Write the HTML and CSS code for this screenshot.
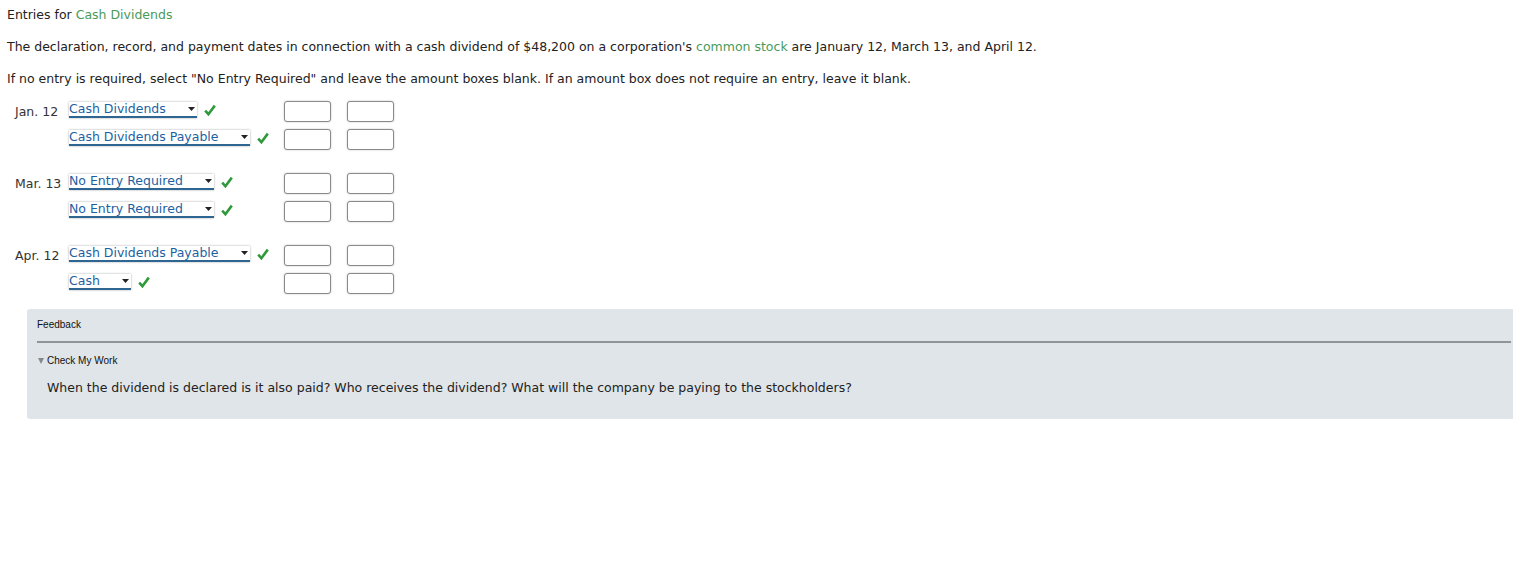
FILE: index.html
```html
<!DOCTYPE html>
<html>
<head>
<meta charset="utf-8">
<link rel="stylesheet" href="styles.css">
</head>
<body>
<div class="page">
  <p class="line">Entries for <span class="term">Cash Dividends</span></p>
  <p class="line">The declaration, record, and payment dates in connection with a cash dividend of $48,200 on a corporation's <span class="term">common stock</span> are January 12, March 13, and April 12.</p>
  <p class="line last">If no entry is required, select "No Entry Required" and leave the amount boxes blank. If an amount box does not require an entry, leave it blank.</p>

  <div class="journal">
    <div class="group">
      <div class="row">
        <div class="date">Jan. 12</div>
        <div class="acct"><span class="select"><span class="sel-text">Cash Dividends</span><svg class="arrow" viewBox="0 0 7 4" width="7" height="4"><path d="M0 0H7L3.5 4Z"/></svg></span><svg class="check" viewBox="0 0 12 12" width="12" height="12"><path d="M1.2 6.6L4.4 10.2L10.8 1.6"/></svg></div>
        <div class="amt"><span class="box"></span></div>
        <div class="amt"><span class="box"></span></div>
      </div>
      <div class="row">
        <div class="date"></div>
        <div class="acct"><span class="select"><span class="sel-text">Cash Dividends Payable</span><svg class="arrow" viewBox="0 0 7 4" width="7" height="4"><path d="M0 0H7L3.5 4Z"/></svg></span><svg class="check" viewBox="0 0 12 12" width="12" height="12"><path d="M1.2 6.6L4.4 10.2L10.8 1.6"/></svg></div>
        <div class="amt"><span class="box"></span></div>
        <div class="amt"><span class="box"></span></div>
      </div>
    </div>
    <div class="group">
      <div class="row">
        <div class="date">Mar. 13</div>
        <div class="acct"><span class="select"><span class="sel-text">No Entry Required</span><svg class="arrow" viewBox="0 0 7 4" width="7" height="4"><path d="M0 0H7L3.5 4Z"/></svg></span><svg class="check" viewBox="0 0 12 12" width="12" height="12"><path d="M1.2 6.6L4.4 10.2L10.8 1.6"/></svg></div>
        <div class="amt"><span class="box"></span></div>
        <div class="amt"><span class="box"></span></div>
      </div>
      <div class="row">
        <div class="date"></div>
        <div class="acct"><span class="select"><span class="sel-text">No Entry Required</span><svg class="arrow" viewBox="0 0 7 4" width="7" height="4"><path d="M0 0H7L3.5 4Z"/></svg></span><svg class="check" viewBox="0 0 12 12" width="12" height="12"><path d="M1.2 6.6L4.4 10.2L10.8 1.6"/></svg></div>
        <div class="amt"><span class="box"></span></div>
        <div class="amt"><span class="box"></span></div>
      </div>
    </div>
    <div class="group">
      <div class="row">
        <div class="date">Apr. 12</div>
        <div class="acct"><span class="select"><span class="sel-text">Cash Dividends Payable</span><svg class="arrow" viewBox="0 0 7 4" width="7" height="4"><path d="M0 0H7L3.5 4Z"/></svg></span><svg class="check" viewBox="0 0 12 12" width="12" height="12"><path d="M1.2 6.6L4.4 10.2L10.8 1.6"/></svg></div>
        <div class="amt"><span class="box"></span></div>
        <div class="amt"><span class="box"></span></div>
      </div>
      <div class="row">
        <div class="date"></div>
        <div class="acct"><span class="select"><span class="sel-text">Cash</span><svg class="arrow" viewBox="0 0 7 4" width="7" height="4"><path d="M0 0H7L3.5 4Z"/></svg></span><svg class="check" viewBox="0 0 12 12" width="12" height="12"><path d="M1.2 6.6L4.4 10.2L10.8 1.6"/></svg></div>
        <div class="amt"><span class="box"></span></div>
        <div class="amt"><span class="box"></span></div>
      </div>
    </div>
  </div>

  <div class="feedback">
    <div class="fb-title">Feedback</div>
    <div class="fb-toggle"><svg class="tri" viewBox="0 0 6 6" width="6" height="6"><path d="M0 0H6L3 6Z"/></svg>Check My Work</div>
    <p class="fb-text">When the dividend is declared is it also paid? Who receives the dividend? What will the company be paying to the stockholders?</p>
  </div>
</div>
</body>
</html>
```

FILE: styles.css
```css
html, body {
  margin: 0;
  padding: 0;
  background: #ffffff;
}

.page {
  padding: 7px 0 0 7px;
  font-family: "DejaVu Sans", Verdana, sans-serif;
  font-size: 12.5px;
  color: #222222;
}

.line {
  margin: 0 0 16px 0;
  line-height: 16px;
}

.line.last {
  margin-bottom: 10px;
}

.term {
  color: #4a9a5a;
}

.journal {
  display: flex;
  flex-direction: column;
  gap: 16px;
}

.row {
  display: grid;
  grid-template-columns: 62px 215px 63px 47px;
  align-items: center;
  height: 28px;
}

.date {
  padding-left: 8px;
  color: #333333;
}

.acct {
  display: flex;
  align-items: center;
  gap: 7px;
  margin-top: -3px;
}

.select {
  display: inline-flex;
  align-items: center;
  height: 14px;
  padding: 0 2px 0 0;
  background: #ffffff;
  border-bottom: 2px solid #2d6593;
  box-shadow: 0 0 2px rgba(0, 0, 0, 0.35);
  color: #1d5fa3;
  line-height: 14px;
}

.sel-text {
  padding-right: 22px;
}

.arrow {
  fill: #222222;
}

.check {
  fill: none;
  stroke: #2f9a3c;
  stroke-width: 2.6;
}

.box {
  display: block;
  width: 45px;
  height: 19px;
  border: 1px solid #8a8a8a;
  border-radius: 3px;
  box-shadow: 0 0 2px rgba(0, 0, 0, 0.25);
  background: #ffffff;
}

.feedback {
  margin-top: 12px;
  margin-left: 20px;
  margin-right: -10px;
  background: #dfe5e8;
  border-radius: 3px;
  padding: 10px 0 0 10px;
  height: 100px;
}

.fb-title {
  font-family: "Liberation Sans", Arial, sans-serif;
  font-size: 10px;
  color: #111111;
  line-height: 12px;
  padding-bottom: 10px;
  border-bottom: 2px solid #8e9597;
  margin-right: 12px;
}

.fb-toggle {
  margin-top: 12px;
  font-family: "Liberation Sans", Arial, sans-serif;
  font-size: 10px;
  color: #111111;
  line-height: 12px;
  display: flex;
  align-items: center;
  gap: 3px;
}

.tri {
  fill: #888888;
  margin-left: 1px;
}

.fb-text {
  margin: 13px 0 0 10px;
  line-height: 16px;
  color: #222222;
}
```
